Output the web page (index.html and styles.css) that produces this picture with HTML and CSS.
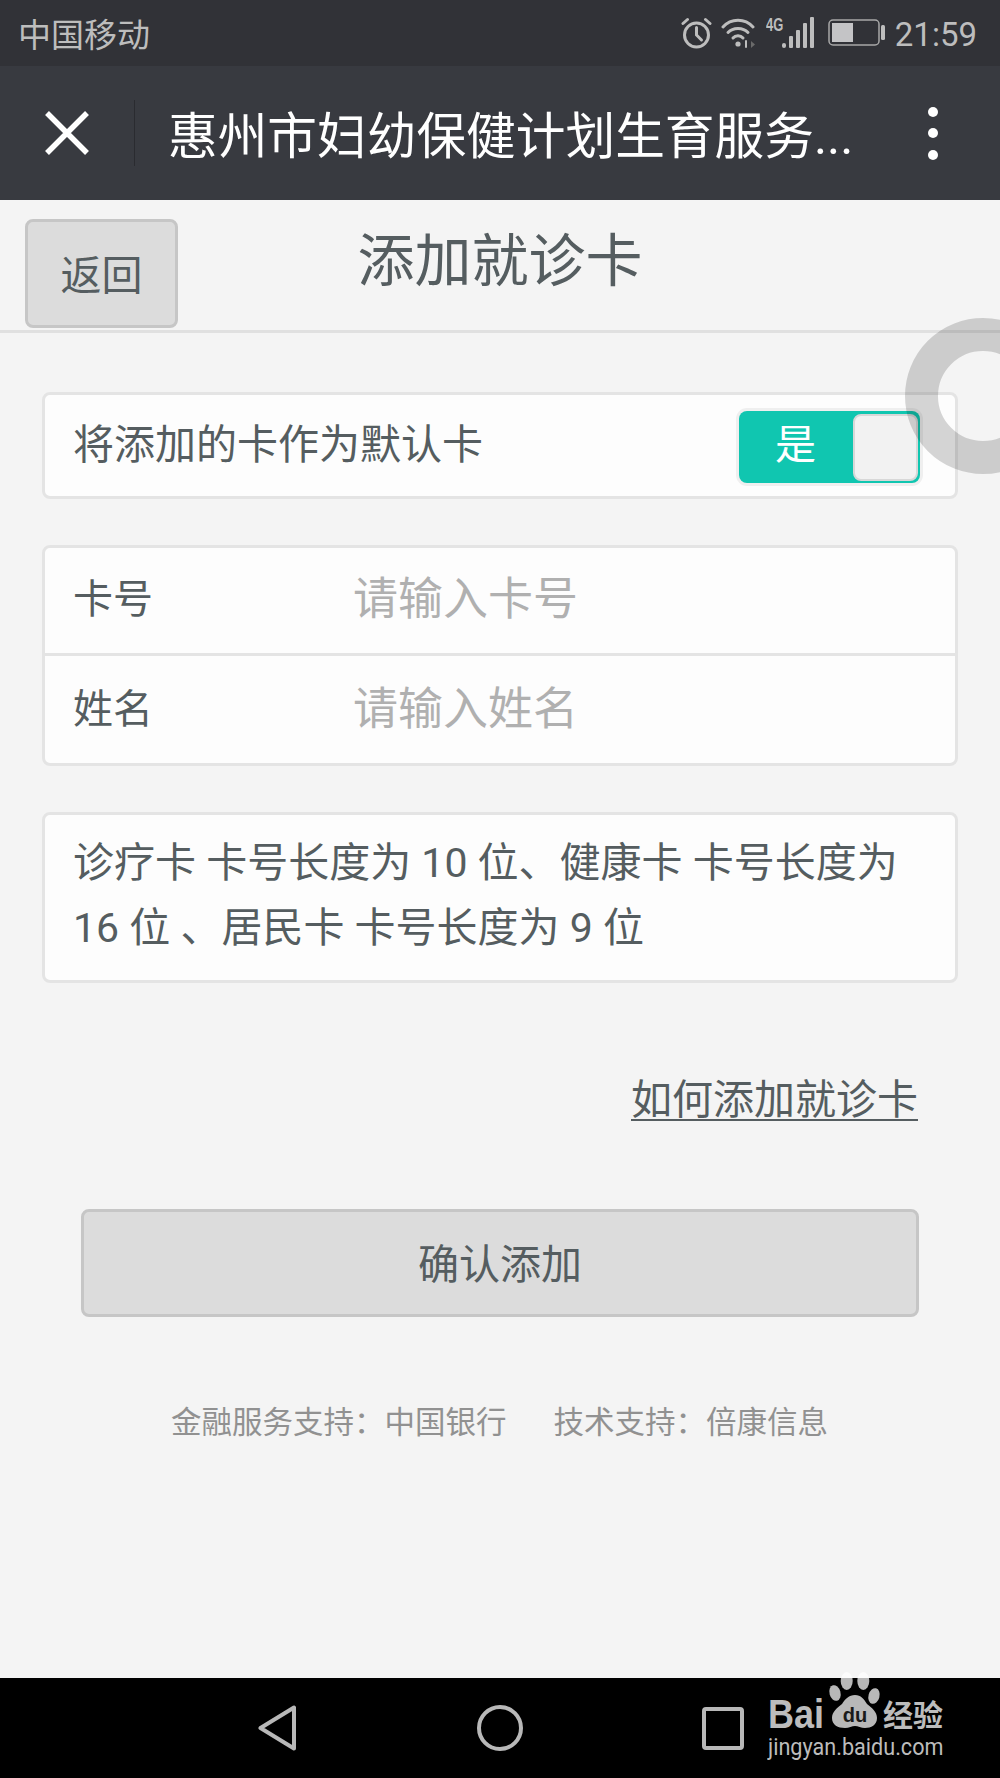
FILE: index.html
```html
<!DOCTYPE html>
<html lang="zh-CN">
<head>
<meta charset="utf-8">
<title>添加就诊卡</title>
<link rel="stylesheet" href="styles.css">
</head>
<body>
<div class="screen">
  <div class="status-bar">
    <span class="carrier">中国移动</span>
    <div class="status-right">
      <svg class="ic-alarm" width="31" height="32" viewBox="0 0 31 32" fill="none" stroke="#bdbdbd" stroke-width="3" stroke-linecap="round">
        <circle cx="15.500" cy="18" r="12"/>
        <path d="M15.500 10.500V18l5 5"/>
        <path d="M2 6.500 6.500 2.500M29 6.500 24.500 2.500"/>
      </svg>
      <svg class="ic-wifi" width="35" height="32" viewBox="0 0 35 32" fill="none" stroke="#bdbdbd" stroke-width="3" stroke-linecap="round">
        <path d="M2 10C10 1 24 1 32 10"/>
        <path d="M7 15.500C12 10 22 10 27 15.500"/>
        <path d="M12 21C14.500 18 19.500 18 22 21"/>
        <circle cx="17" cy="27" r="2.600" fill="#bdbdbd" stroke="none"/>
        <path d="M25 24v6" stroke-width="2"/>
        <path d="M30 24l4 3.500-4 3.500z" fill="#6a6a6a" stroke="none"/>
      </svg>
      <div class="signal">
        <span class="net">4G</span>
        <svg width="32" height="32" viewBox="0 0 32 32" fill="#bdbdbd">
          <rect x="0" y="27" width="4" height="5" rx="2"/>
          <rect x="7" y="20" width="4" height="12" rx="1"/>
          <rect x="14" y="14" width="4" height="18" rx="1"/>
          <rect x="21" y="7" width="4" height="25" rx="1"/>
          <rect x="28" y="1" width="4" height="31" rx="1"/>
        </svg>
      </div>
      <svg class="ic-battery" width="57" height="28" viewBox="0 0 57 28">
        <rect x="1" y="1" width="50" height="25" rx="4" fill="none" stroke="#a8a8a8" stroke-width="1.500"/>
        <rect x="4" y="4" width="21" height="19" fill="#c4c4c6"/>
        <rect x="53" y="6" width="4" height="15" rx="1.500" fill="#bdbdbd"/>
      </svg>
      <span class="clock">21:59</span>
    </div>
  </div>

  <header class="nav-bar">
    <div class="nav-close">
      <svg width="44" height="44" viewBox="0 0 44 44" stroke="#fff" stroke-width="5.500">
        <path d="M2 2 42 42M42 2 2 42"/>
      </svg>
    </div>
    <h1 class="nav-title">惠州市妇幼保健计划生育服务...</h1>
    <div class="nav-more"><i></i><i></i><i></i></div>
  </header>

  <main class="page">
    <div class="page-head">
      <button class="btn-back">返回</button>
      <h2 class="page-title">添加就诊卡</h2>
    </div>

    <section class="card card-default">
      <span class="default-label">将添加的卡作为默认卡</span>
      <div class="switch">
        <span class="switch-text">是</span>
        <span class="switch-knob"></span>
      </div>
    </section>

    <section class="card card-form">
      <div class="form-row">
        <span class="form-label">卡号</span>
        <span class="form-placeholder">请输入卡号</span>
      </div>
      <div class="form-row form-row-last">
        <span class="form-label">姓名</span>
        <span class="form-placeholder">请输入姓名</span>
      </div>
    </section>

    <section class="card card-note">诊疗卡 卡号长度为 10 位、健康卡 卡号长度为 16 位 、居民卡 卡号长度为 9 位</section>

    <div class="help"><a class="help-link">如何添加就诊卡</a></div>

    <div class="actions"><button class="btn-confirm">确认添加</button></div>

    <footer class="credits">
      <span>金融服务支持：中国银行</span>
      <span>技术支持：倍康信息</span>
    </footer>
  </main>

  <nav class="sys-bar">
    <svg width="38" height="46" viewBox="0 0 38 46" fill="none" stroke="#b8b8b8" stroke-width="4" stroke-linejoin="round">
      <path d="M36 2.500V43.500L2.500 23Z"/>
    </svg>
    <svg width="46" height="46" viewBox="0 0 46 46" fill="none" stroke="#b8b8b8" stroke-width="4">
      <circle cx="23" cy="23" r="21"/>
    </svg>
    <svg width="42" height="43" viewBox="0 0 42 43" fill="none" stroke="#b8b8b8" stroke-width="4" stroke-linejoin="round">
      <rect x="2" y="2" width="38" height="39" rx="2"/>
    </svg>
  </nav>

  <!-- floating assistive ring -->
  <div class="float-ring"></div>

  <!-- site mark in the corner -->
  <div class="site-mark">
    <div class="mark-top">
      <span class="mark-bai">Bai</span>
      <svg class="mark-paw" width="52" height="56" viewBox="0 0 52 56">
        <g fill="#fff" fill-opacity="0.72">
          <ellipse cx="7" cy="21" rx="5.500" ry="8" transform="rotate(-15 7 21)"/>
          <ellipse cx="18.700" cy="9" rx="6" ry="9"/>
          <ellipse cx="35.300" cy="9" rx="6" ry="9"/>
          <ellipse cx="46" cy="24" rx="5.500" ry="8" transform="rotate(15 46 24)"/>
          <path d="M27 23c6 0 9 4 12 9 5 4 10 8 10 14 0 7-6 10-12 10-4 0-7-2-10-2s-6 2-10 2c-7 0-13-3-13-10 0-6 5-10 10-14 3-5 7-9 13-9z"/>
        </g>
        <text class="mark-du" x="27" y="50" text-anchor="middle">du</text>
      </svg>
      <span class="mark-cn">经验</span>
    </div>
    <div class="mark-url">jingyan.baidu.com</div>
  </div>
</div>
</body>
</html>
```

FILE: styles.css
```css
* { box-sizing: border-box; }

html, body {
  margin: 0;
  padding: 0;
}

body {
  font-family: Roboto, "Noto Sans CJK SC", "Noto Sans", sans-serif;
  background: #f4f4f4;
}

.screen {
  position: relative;
  width: 1000px;
  height: 1778px;
  overflow: hidden;
  display: flex;
  flex-direction: column;
  background: #f4f4f4;
}

/* status bar */
.status-bar {
  height: 66px;
  flex: none;
  background: #313237;
  display: flex;
  align-items: center;
  justify-content: space-between;
  padding: 0 23px 0 18px;
  color: #bdbdbd;
}

.carrier {
  font-size: 33px;
  line-height: 1;
  margin-top: 5px;
}

.status-right {
  display: flex;
  align-items: center;
}

.ic-alarm { margin-right: 9px; }
.ic-wifi { margin-right: 10px; }

.signal {
  position: relative;
  width: 48px;
  height: 34px;
  display: flex;
  justify-content: flex-end;
  margin-right: 14px;
}

.net {
  position: absolute;
  left: 0;
  top: 0;
  font: 700 18px/1 "Liberation Sans", sans-serif;
  transform: scaleX(0.72);
  transform-origin: left top;
}

.ic-battery { margin-right: 10px; }

.clock {
  font: 400 33px/1 Roboto, sans-serif;
  margin-top: 2px;
}

/* title bar */
.nav-bar {
  height: 134px;
  flex: none;
  background: #383a40;
  display: flex;
  align-items: center;
  position: relative;
}

.nav-close {
  width: 135px;
  height: 66px;
  flex: none;
  display: flex;
  align-items: center;
  justify-content: center;
  border-right: 1px solid #2a2b30;
}

.nav-title {
  margin: 9px 0 0 33px;
  flex: 1;
  color: #fff;
  font-size: 49.700px;
  font-weight: 400;
  line-height: 1;
  white-space: nowrap;
}

.nav-more {
  width: 40px;
  margin-right: 47px;
  display: flex;
  flex-direction: column;
  align-items: center;
  gap: 11.500px;
}

.nav-more i {
  width: 10px;
  height: 10px;
  border-radius: 50%;
  background: #fff;
}

/* page body */
.page {
  flex: 1;
  min-height: 0;
  display: flex;
  flex-direction: column;
}

.page-head {
  height: 133px;
  flex: none;
  border-bottom: 3px solid #e0e0e0;
  position: relative;
  padding: 19px 0 0 25px;
}

.btn-back {
  width: 153px;
  height: 109px;
  background: #dcdcdc;
  border: 3px solid #c6c6c6;
  border-radius: 8px;
  color: #555d60;
  font-family: inherit;
  font-size: 41px;
  padding: 0 0 4px;
}

.page-title {
  position: absolute;
  left: 0;
  right: 0;
  top: 24px;
  margin: 0;
  text-align: center;
  color: #555d60;
  font-size: 57px;
  font-weight: 400;
  line-height: 76px;
}

.card {
  margin: 0 42px;
  background: #fdfdfd;
  border: 3px solid #e4e4e4;
  border-radius: 8px;
  flex: none;
  color: #555d60;
}

.card-default {
  margin-top: 59px;
  height: 107px;
  display: flex;
  align-items: center;
  justify-content: space-between;
  padding: 3px 35px 0 28px;
}

.default-label {
  font-size: 41px;
  line-height: 1;
  margin-bottom: 3px;
}

.switch {
  width: 181px;
  height: 72px;
  border-radius: 8px;
  background: #10c6b0;
  box-shadow: 0 0 0 3px #efefef;
  display: flex;
  align-items: center;
  justify-content: space-between;
  padding: 0 2px 0 36px;
}

.switch-text {
  color: #fff;
  font-size: 41px;
  line-height: 1;
  margin-bottom: 4px;
}

.switch-knob {
  width: 65px;
  height: 67px;
  border-radius: 8px;
  background: #f2f2f2;
  border: 2px solid #d8d8d8;
}

.card-form {
  margin-top: 46px;
  height: 221px;
  display: flex;
  flex-direction: column;
}

.form-row {
  height: 108px;
  flex: none;
  display: flex;
  align-items: center;
  padding: 0 0 2px 28px;
  border-bottom: 3px solid #e4e4e4;
}

.form-row-last {
  flex: 1;
  border-bottom: 0;
  padding-bottom: 0;
}

.form-label {
  width: 280px;
  flex: none;
  font-size: 40px;
  line-height: 1;
}

.form-placeholder {
  color: #b0b0b0;
  font-size: 45px;
  line-height: 1;
}

.card-note {
  margin-top: 46px;
  height: 171px;
  padding: 16px 45px 0 28px;
  font-size: 41px;
  line-height: 65px;
}

.help {
  margin: 83px 82px 0 0;
  text-align: right;
  flex: none;
}

.help-link {
  color: #555d60;
  font-size: 41px;
  line-height: 68px;
  text-decoration: underline;
  text-decoration-thickness: 2px;
  text-underline-offset: 5px;
  display: inline-block;
}

.actions {
  margin: 75px 81px 0;
  flex: none;
}

.btn-confirm {
  display: block;
  width: 100%;
  height: 108px;
  background: #dcdcdc;
  border: 3px solid #c6c6c6;
  border-radius: 8px;
  color: #555d60;
  font-family: inherit;
  font-size: 41px;
  padding: 0 0 4px;
}

.credits {
  margin: 83px 0 0 171px;
  display: flex;
  gap: 47px;
  color: #919191;
  font-size: 30.500px;
  line-height: 46px;
  flex: none;
}

/* system navigation */
.sys-bar {
  margin-top: auto;
  height: 100px;
  flex: none;
  background: #000;
  display: flex;
  align-items: center;
  padding: 0 0 0 258px;
}

.sys-bar svg:nth-child(2) { margin-left: 181px; }
.sys-bar svg:nth-child(3) { margin-left: 179px; }

/* floating ring sits over the page */
.float-ring {
  position: absolute;
  left: 905px;
  top: 318px;
  width: 156px;
  height: 156px;
  border-radius: 50%;
  border: 33.500px solid rgba(0, 0, 0, 0.16);
}

/* corner site mark */
.site-mark {
  position: absolute;
  left: 768px;
  top: 1672px;
  width: 180px;
  color: #bcbcbc;
}

.mark-top {
  display: flex;
  align-items: flex-end;
  height: 56px;
}

.mark-bai {
  font: 700 40px/28px "Liberation Sans", sans-serif;
  width: 60px;
  flex: none;
  transform: scaleX(0.9);
  transform-origin: left bottom;
}

.mark-paw { flex: none; overflow: visible; }

.mark-du {
  font: 700 20px "Liberation Sans", sans-serif;
  fill: #1a1a1a;
}

.mark-cn {
  font-family: "Noto Sans CJK SC", sans-serif;
  font-size: 30px;
  line-height: 1;
  font-weight: 700;
  margin-left: 3px;
  flex: none;
}

.mark-url {
  font: 400 24px/1 Roboto, sans-serif;
  transform: scaleX(0.9);
  transform-origin: left center;
  white-space: nowrap;
  margin-top: 7px;
}
```
